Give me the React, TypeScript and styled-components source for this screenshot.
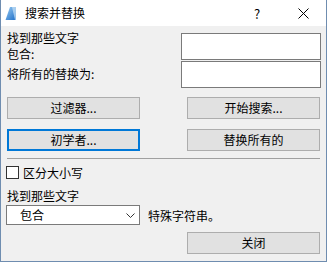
import styled, { createGlobalStyle } from 'styled-components';

const GlobalStyle = createGlobalStyle`
  html, body {
    margin: 0;
    padding: 0;
    background: #ffffff;
  }
  * {
    box-sizing: border-box;
  }
`;

const Window = styled.div`
  width: 327px;
  height: 262px;
  background-color: #f0f0f0;
  border: 1px solid #6f8db0;
  border-top: none;
  font-family: 'Microsoft YaHei UI', 'Noto Sans CJK SC', 'Noto Sans', sans-serif;
  font-size: 12px;
  color: #000;
  display: flex;
  flex-direction: column;
`;

const TitleBar = styled.div`
  height: 26px;
  background-color: #ffffff;
  display: flex;
  align-items: center;
`;

const AppIcon = styled.svg`
  width: 12px;
  height: 13px;
  margin-left: 3px;
  margin-right: 9px;
`;

const TitleText = styled.span`
  flex: 1;
  font-size: 12px;
  line-height: 16px;
`;

const CaptionButton = styled.div`
  width: 46px;
  height: 26px;
  display: flex;
  align-items: center;
  justify-content: center;
  font-size: 13px;
`;

const Content = styled.div`
  padding: 4px 6px 0 6px;
  display: flex;
  flex-direction: column;
`;

const TopSection = styled.div`
  display: flex;
  align-items: flex-start;
`;

const LabelColumn = styled.div`
  flex: 1;
  display: flex;
  flex-direction: column;
`;

const Label = styled.div<{ $gap?: number }>`
  line-height: 16px;
  height: 16px;
  margin-top: ${(p) => p.$gap ?? 0}px;
  white-space: nowrap;
`;

const InputColumn = styled.div`
  width: 140px;
  margin-top: 3px;
  margin-right: -1px;
  display: flex;
  flex-direction: column;
  gap: 1px;
`;

const TextBox = styled.div`
  height: 27px;
  background-color: #ffffff;
  border: 1px solid #7a7a7a;
`;

const ButtonGrid = styled.div`
  margin-top: 9px;
  display: grid;
  grid-template-columns: 133px 133px;
  justify-content: space-between;
  row-gap: 10px;
`;

const Button = styled.div<{ $focused?: boolean }>`
  height: 22px;
  width: 133px;
  background-color: #e1e1e1;
  border: ${(p) => (p.$focused ? '2px solid #0078d7' : '1px solid #adadad')};
  display: flex;
  align-items: center;
  justify-content: center;
  line-height: 16px;
`;

const Separator = styled.div`
  margin-top: 7px;
  height: 1px;
  background-color: #a0a0a0;
`;

const CheckRow = styled.div`
  margin-top: 7px;
  margin-left: -1px;
  height: 13px;
  display: flex;
  align-items: center;
  gap: 4px;
`;

const CheckBox = styled.div`
  width: 13px;
  height: 13px;
  background-color: #ffffff;
  border: 1px solid #333333;
`;

const SelectRow = styled.div`
  margin-top: 1px;
  margin-left: -1px;
  display: flex;
  align-items: center;
  gap: 8px;
`;

const Select = styled.div`
  width: 134px;
  height: 20px;
  background-color: #ffffff;
  border: 1px solid #7a7a7a;
  display: flex;
  align-items: center;
  padding-left: 13px;
  padding-right: 4px;
  line-height: 16px;
`;

const SelectValue = styled.span`
  flex: 1;
`;

const Footer = styled.div`
  margin-top: 7px;
  display: flex;
  justify-content: flex-end;
`;

function App() {
  return (
    <>
      <GlobalStyle />
      <Window>
        <TitleBar>
          <AppIcon viewBox="0 0 12 13">
            <defs>
              <linearGradient id="ic" x1="0" y1="0" x2="1" y2="1">
                <stop offset="0" stopColor="#9fd0f5" />
                <stop offset="1" stopColor="#1f6fc8" />
              </linearGradient>
            </defs>
            <rect x="0" y="0" width="12" height="13" fill="url(#ic)" />
            <path d="M0 0 L6 0 L1.5 13 L0 13 Z" fill="#ffffff" />
            <path d="M8 0 L12 0 L12 13 L11 13 Z" fill="#dceefa" opacity="0.6" />
          </AppIcon>
          <TitleText>搜索并替换</TitleText>
          <CaptionButton>?</CaptionButton>
          <CaptionButton>
            <svg width="11" height="11" viewBox="0 0 11 11">
              <path d="M0.5 0.5 L10.5 10.5 M10.5 0.5 L0.5 10.5" stroke="#000" strokeWidth="1" />
            </svg>
          </CaptionButton>
        </TitleBar>
        <Content>
          <TopSection>
            <LabelColumn>
              <Label>找到那些文字</Label>
              <Label>包合:</Label>
              <Label $gap={4}>将所有的替换为:</Label>
            </LabelColumn>
            <InputColumn>
              <TextBox />
              <TextBox />
            </InputColumn>
          </TopSection>
          <ButtonGrid>
            <Button>过滤器...</Button>
            <Button>开始搜索...</Button>
            <Button $focused>初学者...</Button>
            <Button>替换所有的</Button>
          </ButtonGrid>
          <Separator />
          <CheckRow>
            <CheckBox />
            <span>区分大小写</span>
          </CheckRow>
          <Label $gap={9}>找到那些文字</Label>
          <SelectRow>
            <Select>
              <SelectValue>包合</SelectValue>
              <svg width="9" height="5" viewBox="0 0 9 5">
                <path d="M0.5 0.5 L4.5 4.5 L8.5 0.5" stroke="#333" strokeWidth="1" fill="none" />
              </svg>
            </Select>
            <span>特殊字符串。</span>
          </SelectRow>
          <Footer>
            <Button>关闭</Button>
          </Footer>
        </Content>
      </Window>
    </>
  );
}

export default App;
